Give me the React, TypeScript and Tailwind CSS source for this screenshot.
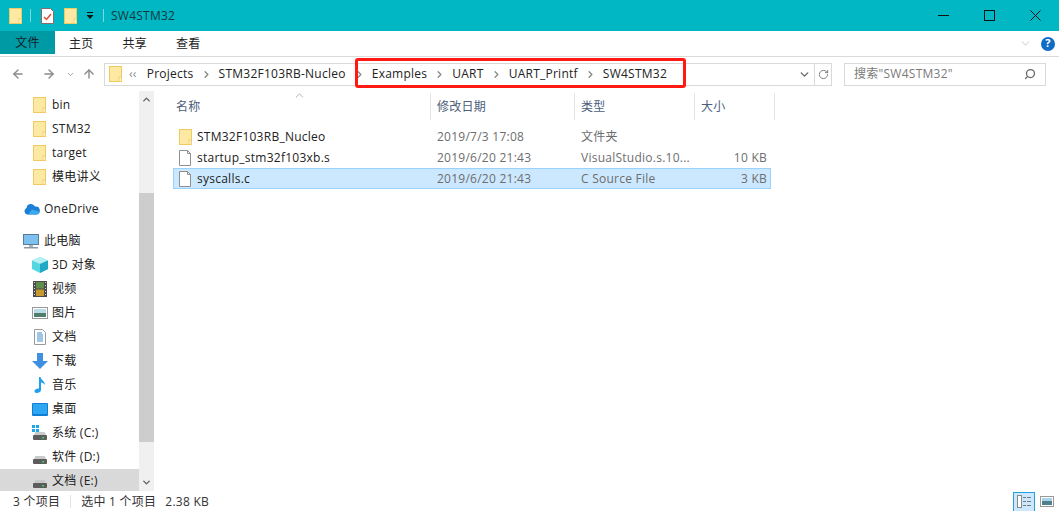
import { ChevronDown, ChevronUp, ChevronRight, ArrowLeft, ArrowRight, ArrowUp, RotateCw, Search } from "lucide-react";

const font = { fontFamily: '"Open Sans", "Noto Sans CJK SC", sans-serif' };

function FolderIcon() {
    return (
        <svg width="13" height="16" viewBox="0 0 13 16" className="shrink-0">
            <rect x="0.5" y="0.5" width="12" height="15" fill="#fde9a4" stroke="#eecb5f" />
            <rect x="10" y="11" width="2.5" height="4.5" fill="#fbf3d0" stroke="#eecb5f" strokeWidth="0.8" />
        </svg>
    );
}

function FileIcon() {
    return (
        <svg width="13" height="16" viewBox="0 0 13 16" className="shrink-0">
            <path d="M0.5 0.5H8.5L11.5 3.5V15.5H0.5Z" fill="#fff" stroke="#8f8f8f" />
            <path d="M8.5 0.5V3.5H11.5" fill="none" stroke="#8f8f8f" />
        </svg>
    );
}

function DriveIcon({ windows }: { windows?: boolean }) {
    return (
        <svg width="16" height="16" viewBox="0 0 16 16" className="shrink-0">
            {windows && (
                <g fill="#1ea7e8">
                    <rect x="0" y="0" width="3" height="3" />
                    <rect x="4" y="0" width="3" height="3" />
                    <rect x="0" y="4" width="3" height="3" />
                    <rect x="4" y="4" width="3" height="3" />
                </g>
            )}
            <path d="M2 10L3.5 7H12.5L14 10Z" fill="#c9c9c9" />
            <rect x="1" y="10" width="14" height="5" rx="1" fill="#5c5c5c" />
            <rect x="10" y="12" width="2" height="1.5" fill="#3fd15a" />
        </svg>
    );
}

function NavIcon({ name }: { name: string }) {
    if (name === "cloud") {
        return (
            <svg width="17" height="12" viewBox="0 0 17 12">
                <path d="M4 11.5A3.5 3.5 0 0 1 3.5 5 4.5 4.5 0 0 1 12 3.5 3.8 3.8 0 0 1 13.5 11.5Z" fill="#1c7fd6" />
                <path d="M5 11.5L9 6.5 16 8.5Q17 11.5 13.5 11.5Z" fill="#3aa9ee" />
            </svg>
        );
    }
    if (name === "pc") {
        return (
            <svg width="16" height="15" viewBox="0 0 16 15">
                <rect x="0.5" y="0.5" width="15" height="10" fill="#7fc1ee" stroke="#5a7c99" />
                <rect x="6" y="11" width="4" height="2" fill="#a9b4bd" />
                <rect x="1" y="13" width="14" height="1.5" fill="#8c99a5" />
            </svg>
        );
    }
    if (name === "cube") {
        return (
            <svg width="16" height="16" viewBox="0 0 16 16">
                <path d="M8 0L16 3.5V12L8 16 0 12V3.5Z" fill="#54d6e2" />
                <path d="M8 0L16 3.5 8 7 0 3.5Z" fill="#b5f0f3" />
                <path d="M8 7L16 3.5V12L8 16Z" fill="#1fa9c4" />
            </svg>
        );
    }
    if (name === "video") {
        return (
            <svg width="14" height="16" viewBox="0 0 14 16">
                <rect width="14" height="16" fill="#4a4a4a" />
                <rect x="3" y="1" width="8" height="6.5" fill="#5f8d4b" />
                <rect x="3" y="8.5" width="8" height="6.5" fill="#c69a2e" />
                <path d="M1 1.5H2M1 4.5H2M1 7.5H2M1 10.5H2M1 13.5H2M12 1.5H13M12 4.5H13M12 7.5H13M12 10.5H13M12 13.5H13" stroke="#ddd" />
            </svg>
        );
    }
    if (name === "picture") {
        return (
            <svg width="16" height="12" viewBox="0 0 16 12">
                <rect x="0.5" y="0.5" width="15" height="11" fill="#fff" stroke="#9a9a9a" />
                <rect x="2" y="2" width="12" height="4" fill="#b9dbea" />
                <rect x="2" y="6" width="12" height="4" fill="#4f7f6c" />
            </svg>
        );
    }
    if (name === "doc") {
        return (
            <svg width="12" height="16" viewBox="0 0 12 16">
                <path d="M0.5 0.5H8.5L11.5 3.5V15.5H0.5Z" fill="#fff" stroke="#9a9a9a" />
                <path d="M3 4H8M3 6H9M3 8H9M3 10H9M3 12H9" stroke="#3f8fcf" />
            </svg>
        );
    }
    if (name === "download") {
        return (
            <svg width="16" height="16" viewBox="0 0 16 16">
                <path d="M5 0H11V8H16L8 16 0 8H5Z" fill="#3f8fe0" />
            </svg>
        );
    }
    if (name === "music") {
        return (
            <svg width="12" height="16" viewBox="0 0 12 16">
                <path d="M5 0H6.5C7 3 11 4 11 8 10 6.5 8.5 5.5 7 5.5V13C7 15 4.5 16 2.5 16 1 16 0.5 15 0.5 14 0.5 12.5 3 11 5 11.5Z" fill="#1ea0ee" />
            </svg>
        );
    }
    if (name === "desktop") {
        return (
            <svg width="16" height="13" viewBox="0 0 16 13">
                <rect width="16" height="13" rx="1" fill="#0f7fd6" />
                <rect x="1" y="1" width="14" height="10" fill="#2ea6f2" />
            </svg>
        );
    }
    return null;
}

const quickAccess = ["bin", "STM32", "target", "模电讲义"];

const libraries = [
    { icon: "cube", label: "3D 对象" },
    { icon: "video", label: "视频" },
    { icon: "picture", label: "图片" },
    { icon: "doc", label: "文档" },
    { icon: "download", label: "下载" },
    { icon: "music", label: "音乐" },
    { icon: "desktop", label: "桌面" },
];

const files = [
    { name: "STM32F103RB_Nucleo", date: "2019/7/3 17:08", type: "文件夹", size: "", folder: true },
    { name: "startup_stm32f103xb.s", date: "2019/6/20 21:43", type: "VisualStudio.s.10...", size: "10 KB" },
    { name: "syscalls.c", date: "2019/6/20 21:43", type: "C Source File", size: "3 KB", selected: true },
];

function Sidebar() {
    return (
        <aside className="flex w-[155px] shrink-0 overflow-hidden">
            <div className="w-[139px] pt-[2px] text-[12px] text-[#222]">
                {quickAccess.map((name) => (
                    <div key={name} className="flex h-6 items-center gap-[6px] pl-[33px]">
                        <FolderIcon />
                        <span>{name}</span>
                    </div>
                ))}
                <div className="mt-2 flex h-6 items-center gap-[4px] pl-[23px]">
                    <NavIcon name="cloud" />
                    <span>OneDrive</span>
                </div>
                <div className="mt-2 flex h-6 items-center gap-[5px] pl-[23px]">
                    <NavIcon name="pc" />
                    <span>此电脑</span>
                </div>
                {libraries.map((item) => (
                    <div key={item.label} className="flex h-6 items-center pl-[31px]">
                        <span className="flex w-[21px] justify-center pr-[4px]">
                            <NavIcon name={item.icon} />
                        </span>
                        <span>{item.label}</span>
                    </div>
                ))}
                <div className="flex h-6 items-center gap-[4px] pl-[32px]">
                    <DriveIcon windows />
                    <span>系统 (C:)</span>
                </div>
                <div className="flex h-6 items-center gap-[4px] pl-[32px]">
                    <DriveIcon />
                    <span>软件 (D:)</span>
                </div>
                <div className="flex h-6 items-center gap-[4px] bg-[#d9d9d9] pl-[32px]">
                    <DriveIcon />
                    <span>文档 (E:)</span>
                </div>
            </div>
            {/* scrollbar */}
            <div className="flex w-[15px] flex-col bg-[#f0f0f0]">
                <div className="flex h-[17px] items-center justify-center">
                    <ChevronUp size={11} strokeWidth={3} className="text-[#606060]" />
                </div>
                <div className="mt-[85px] h-[249px] bg-[#cdcdcd]" />
                <div className="mt-auto flex h-[17px] items-center justify-center">
                    <ChevronDown size={11} strokeWidth={3} className="text-[#606060]" />
                </div>
            </div>
        </aside>
    );
}

function FileList() {
    return (
        <main className="relative flex-1 pl-[18px] pt-[2px] text-[12px]">
            <ChevronUp size={13} strokeWidth={1.2} className="absolute left-[138px] top-[-2px] text-[#8a8a8a]" />
            <div className="flex h-[27px] items-center text-[#4c607a]">
                <div className="flex h-full w-[258px] items-center border-r border-[#e5e5e5] pl-[3px]">名称</div>
                <div className="flex h-full w-[144px] items-center border-r border-[#e5e5e5] pl-[6px]">修改日期</div>
                <div className="flex h-full w-[120px] items-center border-r border-[#e5e5e5] pl-[6px]">类型</div>
                <div className="flex h-full w-[80px] items-center border-r border-[#e5e5e5] pl-[6px]">大小</div>
            </div>
            <div className="mt-[6px] w-[598px]">
                {files.map((file) => (
                    <div
                        key={file.name}
                        className={
                            file.selected
                                ? "flex h-[21px] items-center border border-[#99d1ff] bg-[#cce8ff]"
                                : "flex h-[21px] items-center border border-transparent"
                        }
                    >
                        <div className="flex w-[257px] items-center gap-[5px] pl-[5px] text-[#222]">
                            {file.folder ? <FolderIcon /> : <FileIcon />}
                            <span>{file.name}</span>
                        </div>
                        <div className="w-[144px] pl-[6px] text-[#6d6d6d]">{file.date}</div>
                        <div className="w-[119px] pl-[6px] text-[#6d6d6d]">{file.type}</div>
                        <div className="w-[73px] text-right text-[#6d6d6d]">{file.size}</div>
                    </div>
                ))}
            </div>
        </main>
    );
}

function BreadcrumbItem({ label }: { label: string }) {
    return (
        <>
            <ChevronRight size={11} strokeWidth={3} className="text-[#8a8a8a]" />
            <span className="text-[#222]">{label}</span>
        </>
    );
}

export default function App() {
    return (
        <div className="relative flex h-[511px] w-[1059px] flex-col overflow-hidden bg-white tracking-[0.25px]" style={font}>
            {/* title bar */}
            <header className="flex h-[31px] shrink-0 items-center bg-[#00b7c3] pl-[9px] text-[12px] text-[#10393e]">
                <FolderIcon />
                <div className="ml-[8px] h-[13px] w-px bg-[#7fd6dd]" />
                <svg width="13" height="16" viewBox="0 0 13 16" className="ml-[10px]">
                    <path d="M0.5 0.5H9.5L12.5 3.5V15.5H0.5Z" fill="#fff" stroke="#8a6a6a" />
                    <path d="M3 9L5.5 11.5 10 6" fill="none" stroke="#e2502a" strokeWidth="1.5" />
                </svg>
                <div className="ml-[10px]">
                    <FolderIcon />
                </div>
                <svg width="8" height="8" viewBox="0 0 8 8" className="ml-[9px]">
                    <path d="M1 0.5H7" stroke="#111" />
                    <path d="M0.5 3H7.5L4 7Z" fill="#111" />
                </svg>
                <div className="ml-[9px] h-[13px] w-px bg-[#7fd6dd]" />
                <span className="ml-[7px]">SW4STM32</span>
                {/* window controls */}
                <div className="ml-auto flex items-center pr-[1px]">
                    <span className="flex w-[46px] justify-center">
                        <svg width="11" height="11" viewBox="0 0 11 11" shapeRendering="crispEdges">
                            <path d="M0 5.5H11" stroke="#111" />
                        </svg>
                    </span>
                    <span className="flex w-[46px] justify-center">
                        <svg width="11" height="11" viewBox="0 0 11 11" shapeRendering="crispEdges">
                            <rect x="0.5" y="0.5" width="10" height="10" fill="none" stroke="#111" />
                        </svg>
                    </span>
                    <span className="flex w-[46px] justify-center">
                        <svg width="11" height="11" viewBox="0 0 11 11">
                            <path d="M0.5 0.5L10.5 10.5M10.5 0.5L0.5 10.5" stroke="#111" />
                        </svg>
                    </span>
                </div>
            </header>

            {/* ribbon tabs */}
            <nav className="flex h-[26px] shrink-0 items-center border-b border-[#dadada] text-[12px] text-[#222]">
                <div className="flex h-[23px] w-[55px] items-center justify-center self-start bg-[#009aa5] text-[#10252a]">文件</div>
                <div className="ml-[14px]">主页</div>
                <div className="ml-[29px]">共享</div>
                <div className="ml-[29px]">查看</div>
                <div className="ml-auto mr-[4px] flex items-center gap-[9px]">
                    <ChevronDown size={13} strokeWidth={1.2} className="text-[#a8a8a8]" />
                    <span className="flex h-[14px] w-[14px] items-center justify-center rounded-full bg-[#0f6cc4] text-[11px] font-bold text-white">?</span>
                </div>
            </nav>

            {/* address row */}
            <div className="flex h-[34px] shrink-0 items-center pl-[11px] text-[12px]">
                <ArrowLeft size={14} strokeWidth={2.4} className="text-[#8a8a8a]" />
                <ArrowRight size={14} strokeWidth={2.4} className="ml-[17px] text-[#8a8a8a]" />
                <ChevronDown size={9} strokeWidth={2.5} className="ml-[10px] text-[#a0a0a0]" />
                <ArrowUp size={14} strokeWidth={2.4} className="ml-[7px] text-[#8a8a8a]" />
                <div className="ml-[8px] flex h-[23px] w-[728px] items-center border border-[#d9d9d9] pl-[4px]">
                    <FolderIcon />
                    <span className="ml-[7px] text-[#8a8a8a]">‹‹</span>
                    <span className="ml-[10px] text-[#222]">Projects</span>
                    <div className="ml-[7px] flex items-center gap-[7px]">
                        <ChevronRight size={11} strokeWidth={3} className="text-[#8a8a8a]" />
                        <span className="mr-px text-[#222]">STM32F103RB-Nucleo</span>
                        <BreadcrumbItem label="Examples" />
                        <BreadcrumbItem label="UART" />
                        <BreadcrumbItem label="UART_Printf" />
                        <BreadcrumbItem label="SW4STM32" />
                    </div>
                    <ChevronDown size={13} strokeWidth={2.5} className="ml-auto mr-[3px] text-[#666]" />
                    <div className="flex h-full w-[17px] items-center justify-center border-l border-[#d9d9d9]">
                        <RotateCw size={11} strokeWidth={2} className="text-[#777]" />
                    </div>
                </div>
                <div className="ml-[12px] flex h-[23px] w-[202px] items-center border border-[#d9d9d9] px-[9px] text-[#7a7a7a]">
                    <span>搜索"SW4STM32"</span>
                    <Search size={12} strokeWidth={2.5} className="ml-auto -scale-x-100 text-[#666]" />
                </div>
            </div>

            {/* body */}
            <div className="flex min-h-0 flex-1">
                <Sidebar />
                <FileList />
            </div>

            {/* status bar */}
            <footer className="flex h-[20px] shrink-0 items-center pl-[13px] pt-px text-[12px] text-[#333]">
                <span>3 个项目</span>
                <div className="ml-[10px] h-[13px] w-px bg-[#e2e2e2]" />
                <span className="ml-[10px]">选中 1 个项目</span>
                <span className="ml-[9px]">2.38 KB</span>
                <div className="ml-auto mr-[4px] flex items-center gap-[4px]">
                    <div className="flex h-[20px] w-[22px] items-center justify-center border border-[#26a0da] bg-[#cce8ff]">
                        <svg width="15" height="13" viewBox="0 0 15 13">
                            <rect x="0.5" y="0.5" width="4" height="12" fill="#fff" stroke="#888" />
                            <path d="M6 2.5H9M10 2.5H14M6 6.5H9M10 6.5H14M6 10.5H9M10 10.5H14" stroke="#777" />
                        </svg>
                    </div>
                    <svg width="14" height="11" viewBox="0 0 14 11" className="mx-[1px]">
                        <rect x="0.5" y="0.5" width="13" height="10" fill="#fff" stroke="#999" />
                        <rect x="2" y="2" width="10" height="3" fill="#a9d3e8" />
                        <rect x="2" y="5" width="10" height="4" fill="#4f7f8c" />
                    </svg>
                </div>
            </footer>

            {/* red annotation around the path */}
            <div className="absolute left-[355px] top-[58px] h-[30px] w-[331px] rounded-[3px] border-[3px] border-[#fe1a12]" />
        </div>
    );
}
